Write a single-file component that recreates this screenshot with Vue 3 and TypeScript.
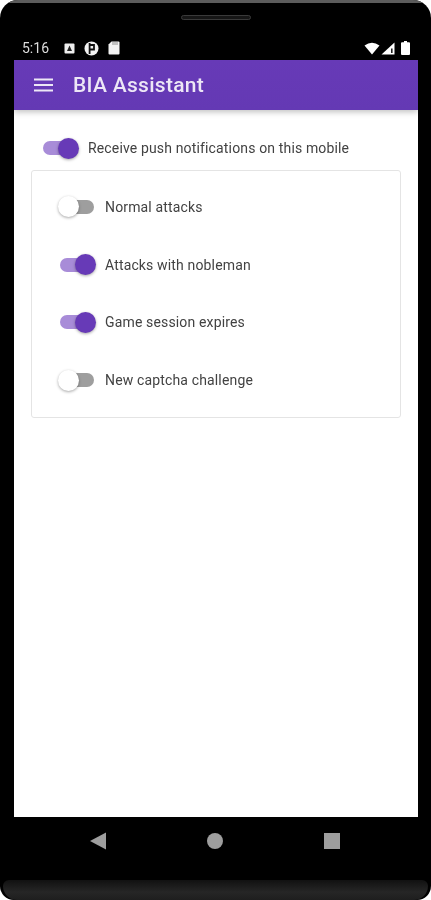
<template>
  <div class="phone">
    <div class="top-edge"></div>
    <div class="speaker"></div>

    <div class="status-bar">
      <span class="time">5:16</span>
      <svg class="status-icon" width="11" height="11" viewBox="0 0 11 11">
        <rect x="0.5" y="0.5" width="10" height="10" rx="1" fill="#eee" />
        <path d="M5.5 2.5 L8 8 H3 Z" fill="#222" />
      </svg>
      <svg class="status-icon" width="15" height="15" viewBox="0 0 15 15">
        <circle cx="7.5" cy="7.5" r="7" fill="#f2f2f2" />
        <path d="M5.6 2 V13 M5.6 4 H10 V8.5 H5.6" stroke="#111" stroke-width="1.8" fill="none" />
      </svg>
      <svg class="status-icon" width="12" height="14" viewBox="0 0 12 14">
        <path d="M3.5 0.5 H10.5 Q11.5 0.5 11.5 1.5 V12.5 Q11.5 13.5 10.5 13.5 H1.5 Q0.5 13.5 0.5 12.5 V3.5 Z" fill="#f2f2f2" />
        <path d="M5 1 V4 M7 1 V4 M9 1 V4" stroke="#777" stroke-width="0.8" />
      </svg>
      <span class="spacer"></span>
      <svg width="16" height="13" viewBox="0 0 16 13">
        <path d="M0.5 3.5 Q8 -2 15.5 3.5 L8 12.5 Z" fill="#fff" />
      </svg>
      <svg class="signal" width="14" height="13" viewBox="0 0 14 13">
        <path d="M13.5 0.5 V12.5 H0.5 Z" fill="#fff" />
        <path d="M10 6.5 V11 H11.6 V6.5 Z" fill="#222" />
      </svg>
      <svg class="battery" width="9" height="14" viewBox="0 0 9 14">
        <path d="M3 0 H6 V1.2 H8 Q9 1.2 9 2.2 V13 Q9 14 8 14 H1 Q0 14 0 13 V2.2 Q0 1.2 1 1.2 H3 Z" fill="#fff" />
      </svg>
    </div>

    <div class="screen">
      <header class="toolbar">
        <svg class="menu" width="20" height="14" viewBox="0 0 20 14">
          <path d="M0 1.5 H19 M0 7 H19 M0 12.5 H19" stroke="#ede7f6" stroke-width="2" />
        </svg>
        <span class="title">BIA Assistant</span>
      </header>

      <main class="content">
        <div class="master-row">
          <span class="switch on"><span class="thumb"></span></span>
          <span class="label">Receive push notifications on this mobile</span>
        </div>

        <section class="card">
          <div v-for="item in items" :key="item.label" class="card-row">
            <span :class="['switch', { on: item.on }]"><span class="thumb"></span></span>
            <span class="label">{{ item.label }}</span>
          </div>
        </section>
      </main>
    </div>

    <nav class="nav-bar">
      <svg width="16" height="18" viewBox="0 0 16 18"><path d="M16 0.5 V17.5 L0 9 Z" fill="#9e9e9e" /></svg>
      <svg width="16" height="16" viewBox="0 0 16 16"><circle cx="8" cy="8" r="8" fill="#9e9e9e" /></svg>
      <svg width="16" height="16" viewBox="0 0 16 16"><rect width="16" height="16" fill="#9e9e9e" /></svg>
    </nav>

    <div class="bottom-edge"></div>
  </div>
</template>

<script setup lang="ts">
interface NotificationItem {
  label: string
  on: boolean
}

const items: NotificationItem[] = [
  { label: 'Normal attacks', on: false },
  { label: 'Attacks with nobleman', on: true },
  { label: 'Game session expires', on: true },
  { label: 'New captcha challenge', on: false }
]
</script>

<style>
html,
body {
  margin: 0;
  background: #fff;
}
</style>

<style scoped>
.phone {
  position: relative;
  width: 431px;
  height: 900px;
  display: flex;
  flex-direction: column;
  background: #000;
  border-radius: 18px 18px 14px 14px;
  overflow: hidden;
  font-family: Roboto, "Noto Sans", sans-serif;
  filter: blur(0.45px);
}

.top-edge {
  height: 3px;
  background: #5c5c5c;
  flex: none;
}

.speaker {
  flex: none;
  width: 70px;
  height: 5px;
  margin: 12px auto 0;
  border-radius: 3px;
  background: #161616;
  border: 1px solid #3a3a3a;
  box-sizing: border-box;
}

.status-bar {
  flex: none;
  height: 40px;
  padding: 16px 21px 0 22px;
  display: flex;
  align-items: center;
  box-sizing: border-box;
}

.time {
  width: 42px;
  color: #ddd;
  font-size: 14px;
}

.status-icon {
  margin-right: 9px;
}

.spacer {
  flex: 1;
}

.signal {
  margin-left: 1px;
}

.battery {
  margin-left: 6px;
}

.screen {
  flex: none;
  height: 757px;
  margin: 0 13px 0 14px;
  background: #fff;
  display: flex;
  flex-direction: column;
}

.toolbar {
  flex: none;
  height: 50px;
  padding-left: 20px;
  display: flex;
  align-items: center;
  background: linear-gradient(180deg, #673ab7, #6439b4);
  box-shadow: 0 2px 6px rgba(0, 0, 0, 0.25);
}

.menu {
  margin-right: 19px;
}

.title {
  color: #ede7f6;
  font-size: 21px;
  font-weight: 500;
  letter-spacing: 0.3px;
}

.content {
  padding: 0 17px;
}

.master-row {
  height: 60px;
  padding-left: 12px;
  display: flex;
  align-items: center;
  box-sizing: border-box;
  padding-top: 16px;
}

.card {
  height: 248px;
  box-sizing: border-box;
  padding: 7px 0 8px 28px;
  border: 1px solid #e4e4e4;
  border-radius: 3px;
  display: grid;
  grid-auto-rows: 1fr;
}

.card-row {
  display: flex;
  align-items: center;
}

.switch {
  position: relative;
  flex: none;
  width: 34px;
  height: 14px;
  margin-right: 11px;
  border-radius: 7px;
  background: #9e9e9e;
}

.switch.on {
  background: #a88cd8;
}

.thumb {
  position: absolute;
  top: -3.5px;
  left: -2.5px;
  width: 21px;
  height: 21px;
  border-radius: 50%;
  background: #fff;
  box-shadow: 0 1px 3px rgba(0, 0, 0, 0.35);
}

.on .thumb {
  left: 14.5px;
  background: #673ab7;
}

.label {
  color: #424242;
  font-size: 14px;
  letter-spacing: 0.15px;
}

.nav-bar {
  flex: none;
  height: 48px;
  padding: 0 91px 0 90px;
  display: flex;
  align-items: center;
  justify-content: space-between;
}

.bottom-edge {
  position: absolute;
  left: 3px;
  right: 3px;
  bottom: 0;
  height: 20px;
  border-radius: 6px 6px 14px 14px;
  background: linear-gradient(180deg, #111, #262626 60%, #1e1e1e);
}
</style>
